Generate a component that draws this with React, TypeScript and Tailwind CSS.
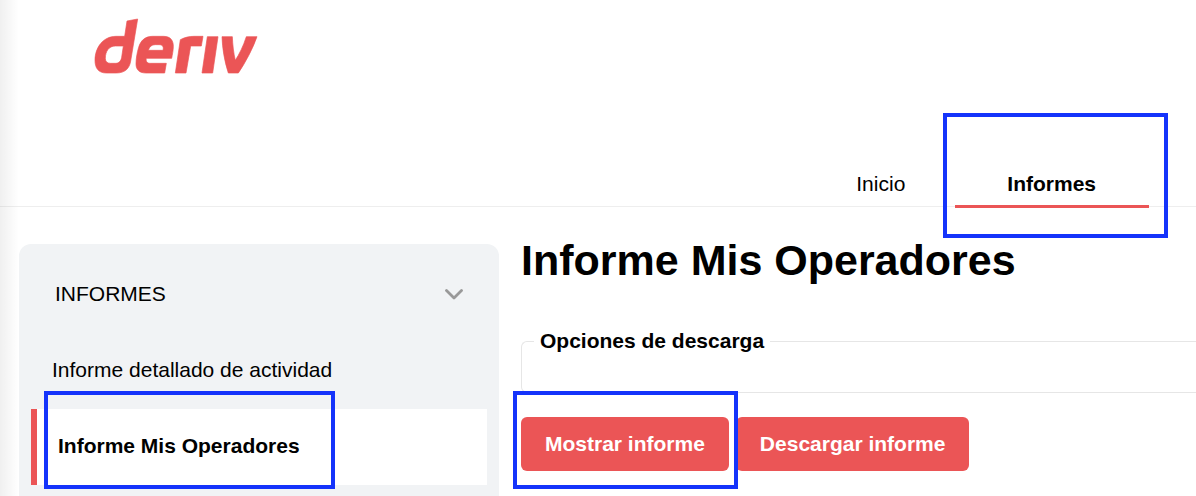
import type { ReactNode } from "react";

function DerivLogo() {
  return (
    <svg
      viewBox="45 27 486 162"
      className="h-[54px] w-[162px] overflow-visible fill-[#eb5556] stroke-[#eb5556]"
      strokeWidth="2"
      role="img"
      aria-label="deriv"
    >
      <path
        fillRule="evenodd"
        d="M173 27 141 33 134 79H108C70 79 45 112 45 151C45 174 55 189 79 189H109C136 189 149 174 152 153ZM130 108 125 142C123 154 116 160 106 160H92C81 160 76 154 76 145C76 124 87 108 106 108Z"
      />
      <path
        fillRule="evenodd"
        d="M217 79H251C271 79 280 91 280 109C280 121 277 134 275 145H199C197 155 202 160 211 160H259L254 189H198C178 189 168 179 168 162C168 147 171 128 176 112C182 92 195 79 217 79ZM205 121H249C252 109 247 104 237 104H226C215 104 208 110 205 121Z"
      />
      <path d="M286 189 301 89C315 82 327 79 342 79H369L364 108H332L318 189Z" />
      <path d="M382 80H414L398 189H366Z" />
      <path d="M426 80H457C458 105 461 130 466 151C478 132 490 108 499 80H531C518 117 496 158 475 189H445C433 153 427 113 426 80Z" />
    </svg>
  );
}

function Highlight({ className }: { className: string }) {
  return <span aria-hidden="true" className={`pointer-events-none absolute z-10 border-4 border-[#1433fb] ${className}`} />;
}

function ActionButton({ children }: { children: ReactNode }) {
  return (
    <button type="button" className="h-[54px] rounded-md bg-[#eb5556] px-6 font-bold whitespace-nowrap text-white">
      {children}
    </button>
  );
}

export default function App() {
  return (
    <div className="relative min-h-screen overflow-hidden bg-white font-['Liberation_Sans',Arial,sans-serif] text-[21px] leading-6 text-black">
      <header className="border-b border-[#eeeeee] pt-[19px]">
        <a href="#inicio" className="ml-[95px] inline-block align-top">
          <DerivLogo />
        </a>
        <nav className="-mb-[2px] flex justify-end pt-[99px] pr-[47px]">
          <a href="#inicio" className="px-[50px] pb-2">
            Inicio
          </a>
          <a href="#informes" className="relative border-b-3 border-[#eb5556] pr-[53px] pb-[9px] pl-[52px] font-bold">
            Informes
            <Highlight className="-top-[59px] -right-[19px] -bottom-[33px] -left-3" />
          </a>
        </nav>
      </header>

      <div className="flex gap-[22px] pl-[19px]">
        <aside className="mt-[37px] w-[480px] shrink-0 rounded-t-xl bg-[#f1f3f5] px-3 pt-[38px] pb-3">
          <button type="button" className="flex w-full items-center justify-between px-6">
            INFORMES
            <svg
              viewBox="0 0 18 12"
              className="h-3 w-[18px] fill-none stroke-[#999999]"
              strokeWidth="2.8"
              strokeLinecap="round"
              strokeLinejoin="round"
              aria-hidden="true"
            >
              <path d="M1.5 2.5 9 10 16.5 2.5" />
            </svg>
          </button>
          <ul className="pt-[52px]">
            <li>
              <a href="#actividad" className="block pb-[27px] pl-[21px]">
                Informe detallado de actividad
              </a>
            </li>
            <li>
              <a href="#operadores" className="relative block border-l-6 border-[#eb5556] bg-white pt-[25px] pb-[27px] pl-[21px] font-bold">
                Informe Mis Operadores
                <Highlight className="-top-[18px] -bottom-1 left-[7px] w-[291px]" />
              </a>
            </li>
          </ul>
        </aside>

        <main className="min-w-0 flex-1 pt-7">
          <h1 className="text-[43px] leading-[50px] font-bold whitespace-nowrap">Informe Mis Operadores</h1>
          <fieldset className="mt-11 rounded-l-md border border-r-0 border-[#e6e6e6] pb-[39px] pl-3">
            <legend className="px-[6px] font-bold">Opciones de descarga</legend>
          </fieldset>
          <div className="mt-6 flex gap-[7px]">
            <div className="relative">
              <ActionButton>Mostrar informe</ActionButton>
              <Highlight className="-top-[26px] -right-[9px] -bottom-[18px] -left-2" />
            </div>
            <ActionButton>Descargar informe</ActionButton>
          </div>
        </main>
      </div>

      <div aria-hidden="true" className="pointer-events-none absolute inset-y-0 left-0 w-[19px] bg-linear-to-r from-black/6 to-transparent" />
    </div>
  );
}
